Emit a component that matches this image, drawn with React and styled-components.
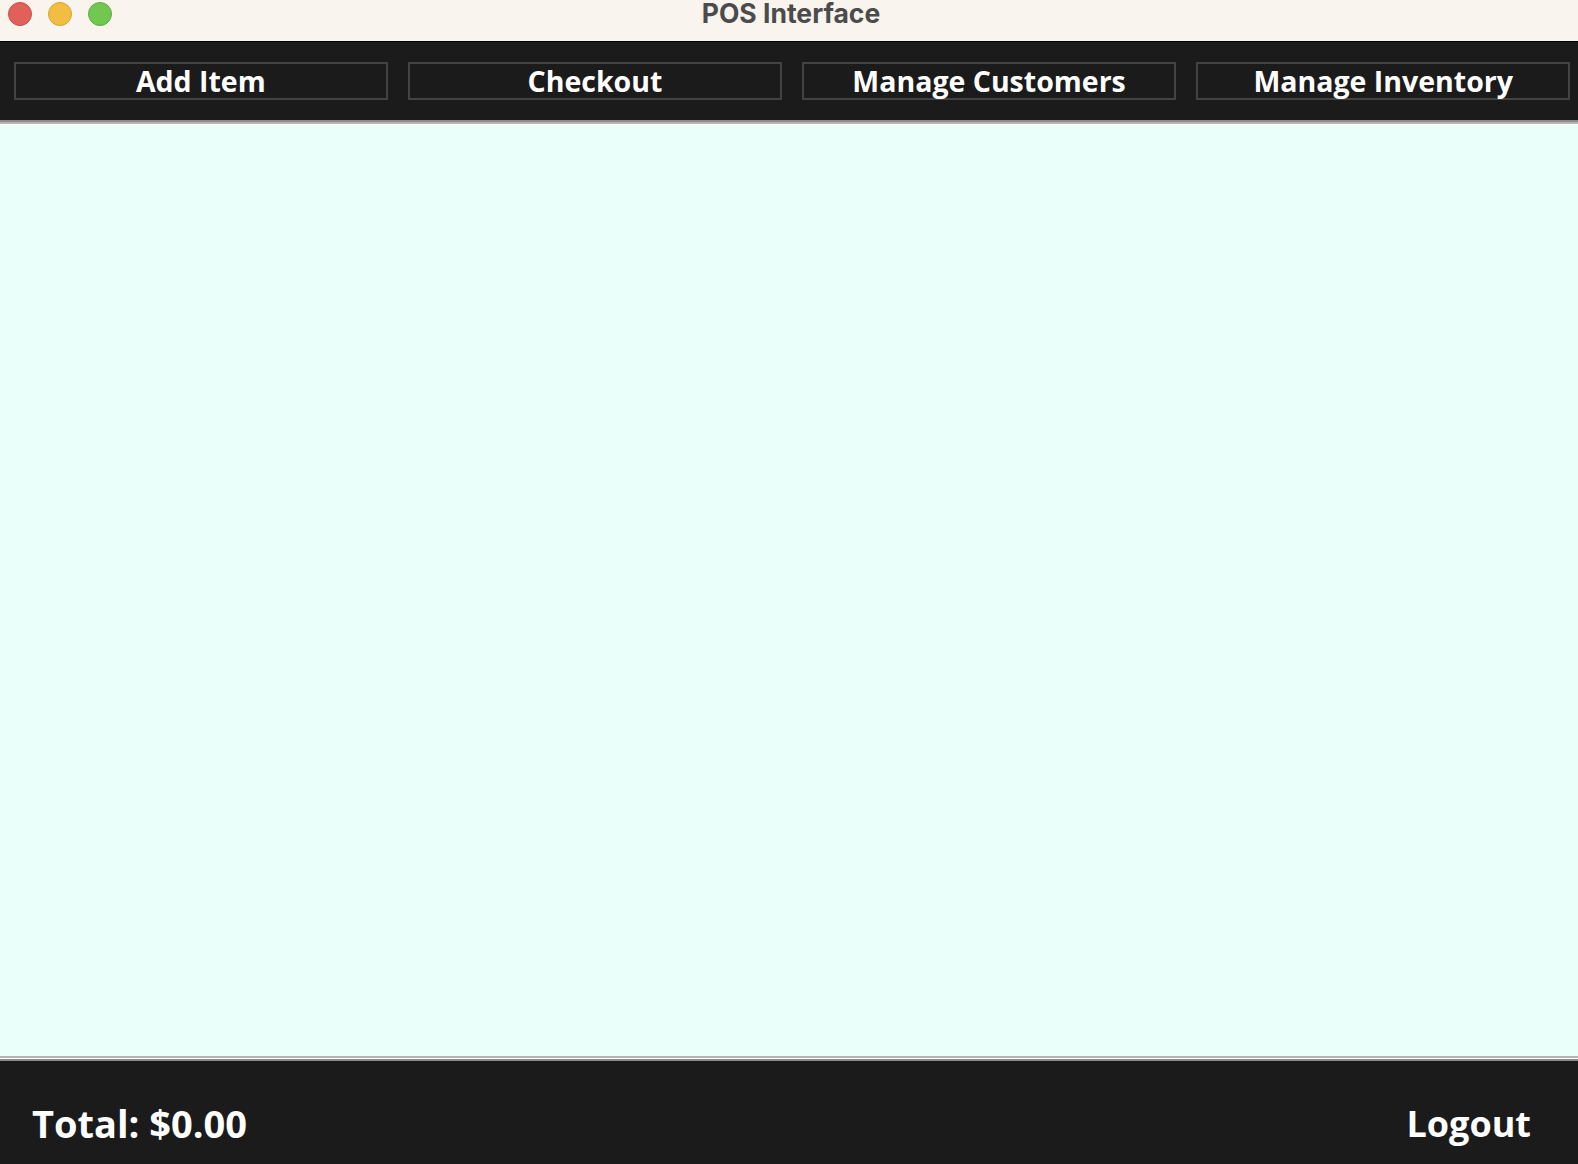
import React from "react";
import styled, { createGlobalStyle } from "styled-components";

const Global = createGlobalStyle`
  html, body { margin: 0; padding: 0; background: #1c1b1c; }
  #root { height: 100vh; }
  * { box-sizing: border-box; }
`;

const Window = styled.div`
  display: flex;
  flex-direction: column;
  height: 100vh;
  overflow: hidden;
  font-family: "Open Sans", "DejaVu Sans", sans-serif;
`;

const TitleBar = styled.div`
  position: relative;
  height: 42px;
  flex: 0 0 42px;
  background: #f9f4ee;
  border-bottom: 1px solid #000;
  display: flex;
  align-items: flex-start;
`;

const Lights = styled.div`
  display: flex;
  gap: 16px;
  padding: 2px 0 0 8px;
`;

const Light = styled.span`
  width: 24px;
  height: 24px;
  border-radius: 50%;
  background: ${(p) => p.$c};
  border: 1px solid ${(p) => p.$b};
`;

const Title = styled.div`
  position: absolute;
  left: 0;
  right: 0;
  top: 0;
  padding-left: 4px;
  text-align: center;
  font-family: Inter, "Noto Sans", sans-serif;
  font-weight: 700;
  font-size: 26.5px;
  line-height: 27px;
  color: #4b4b4b;
`;

const Toolbar = styled.div`
  flex: 0 0 78px;
  background: #1c1b1c;
  display: grid;
  grid-template-columns: repeat(4, 1fr);
  column-gap: 20.5px;
  padding: 20px 8px 0 14px;
  align-items: start;
`;

const ToolButton = styled.button`
  height: 38px;
  background: #1c1b1c;
  border: 2px solid #444344;
  color: #ffffff;
  font-family: "Open Sans", sans-serif;
  font-weight: 700;
  font-size: 28.5px;
  line-height: 34px;
  padding: 0;
  cursor: pointer;
`;

const Content = styled.div`
  flex: 1 1 auto;
  background: #eafffa;
  border-top: 2px solid #8c8c8c;
  border-bottom: 2px solid #8c8c8c;
  box-shadow: inset 0 2px 0 #b5b5b5, inset 0 3px 0 #ffffff,
    inset 0 -1px 0 #ffffff, inset 0 -3px 0 #b5b5b5;
`;

const BottomBar = styled.div`
  flex: 0 0 103px;
  background: #1c1b1c;
  display: flex;
  justify-content: space-between;
  align-items: flex-start;
  padding: 44px 47px 0 32px;
`;

const Label = styled.div`
  color: #ffffff;
  font-family: "Open Sans", sans-serif;
  font-weight: 700;
  font-size: 38px;
  line-height: 37.5px;
`;

const LogoutButton = styled.button`
  background: transparent;
  border: none;
  padding: 0;
  color: #ffffff;
  font-family: "Open Sans", sans-serif;
  font-weight: 700;
  font-size: 36px;
  line-height: 37.5px;
  cursor: pointer;
`;

export default function App() {
  const actions = ["Add Item", "Checkout", "Manage Customers", "Manage Inventory"];
  return (
    <>
      <Global />
      <Window>
        <TitleBar>
          <Lights>
            <Light $c="#e2605a" $b="#c94d47" />
            <Light $c="#f1be41" $b="#d7a334" />
            <Light $c="#72c751" $b="#5cad40" />
          </Lights>
          <Title>POS Interface</Title>
        </TitleBar>
        <Toolbar>
          {actions.map((a) => (
            <ToolButton key={a}>{a}</ToolButton>
          ))}
        </Toolbar>
        <Content />
        <BottomBar>
          <Label>Total: $0.00</Label>
          <LogoutButton>Logout</LogoutButton>
        </BottomBar>
      </Window>
    </>
  );
}
